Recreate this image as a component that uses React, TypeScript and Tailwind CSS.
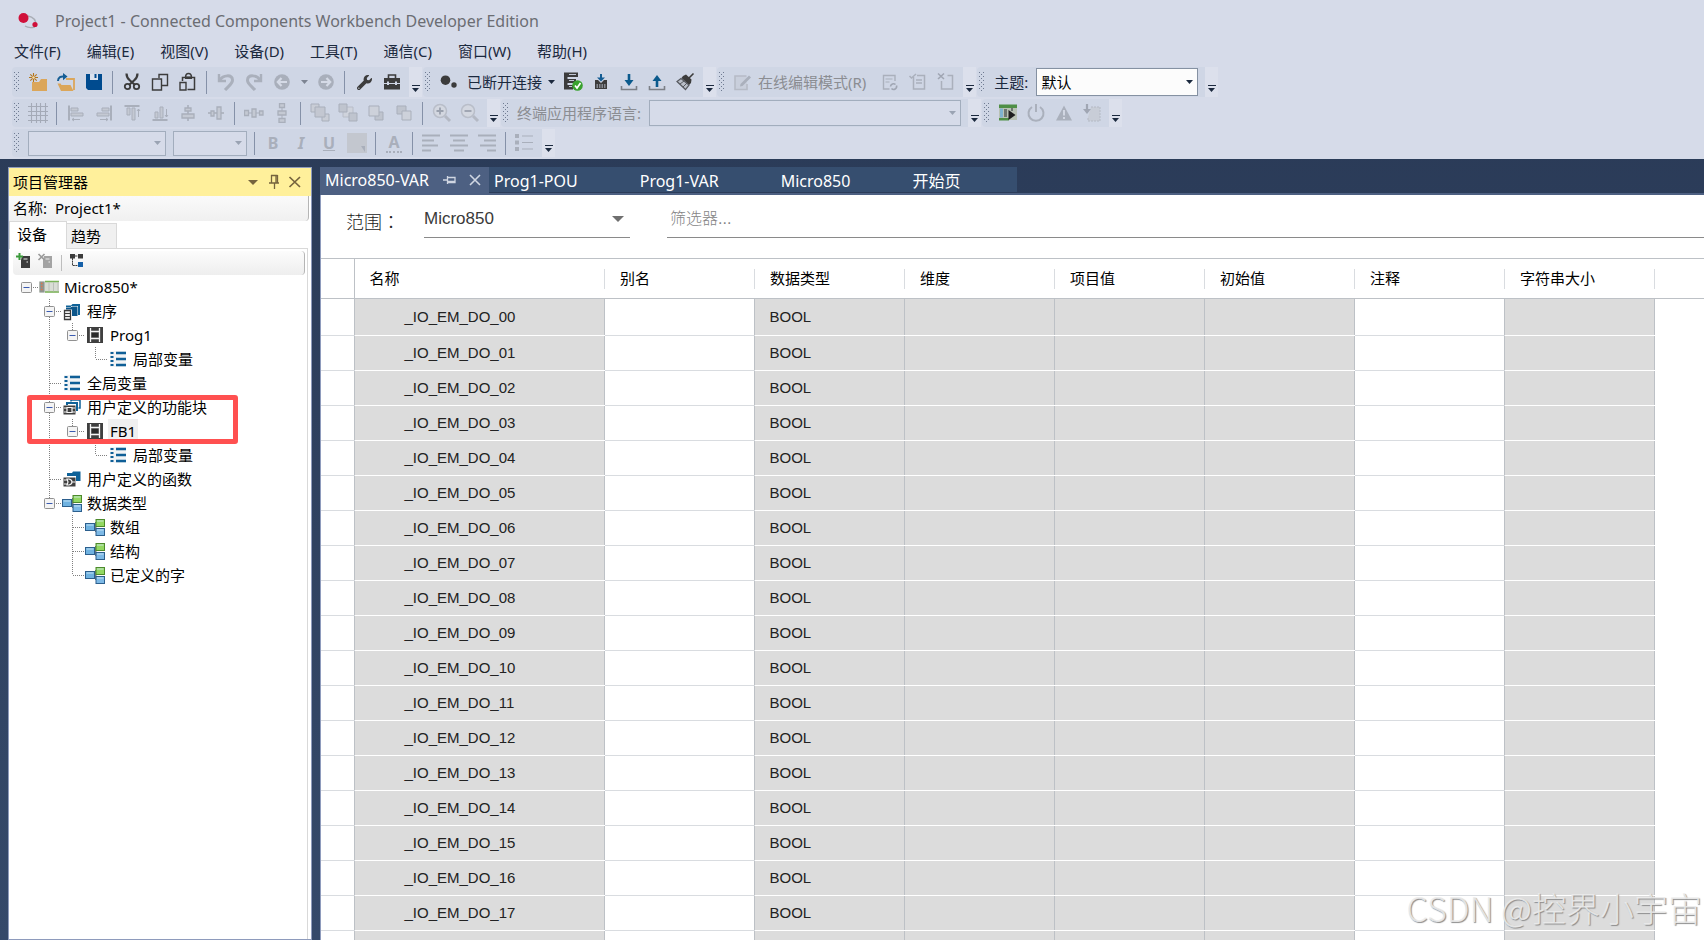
import type { ReactNode } from "react"
import { FaWrench } from "react-icons/fa"

const menus = ["文件(F)", "编辑(E)", "视图(V)", "设备(D)", "工具(T)", "通信(C)", "窗口(W)", "帮助(H)"]

const tabs = ["Prog1-POU", "Prog1-VAR", "Micro850", "开始页"]

const columns = [
  { name: "名称", locked: true },
  { name: "别名", locked: false },
  { name: "数据类型", locked: true },
  { name: "维度", locked: true },
  { name: "项目值", locked: true },
  { name: "初始值", locked: true },
  { name: "注释", locked: false },
  { name: "字符串大小", locked: true },
]

const variables = Array.from({ length: 18 }, (_, i) => `_IO_EM_DO_${String(i).padStart(2, "0")}`)

// the trailing empty entry is the blank row under the list
const rows = [...variables, ""]

type Guide = "blank" | "line" | "tee" | "elbow" | "root" | "open" | "openEnd"
type IconName = "device" | "programs" | "ladder" | "list" | "blocks" | "functions" | "types"

const tree: { label: string; icon: IconName; guides: Guide[]; selected?: boolean }[] = [
  { label: "Micro850*", icon: "device", guides: ["root"] },
  { label: "程序", icon: "programs", guides: ["blank", "open"] },
  { label: "Prog1", icon: "ladder", guides: ["blank", "line", "openEnd"] },
  { label: "局部变量", icon: "list", guides: ["blank", "line", "blank", "elbow"] },
  { label: "全局变量", icon: "list", guides: ["blank", "tee"] },
  { label: "用户定义的功能块", icon: "blocks", guides: ["blank", "open"] },
  { label: "FB1", icon: "ladder", guides: ["blank", "line", "openEnd"], selected: true },
  { label: "局部变量", icon: "list", guides: ["blank", "line", "blank", "elbow"] },
  { label: "用户定义的函数", icon: "functions", guides: ["blank", "tee"] },
  { label: "数据类型", icon: "types", guides: ["blank", "openEnd"] },
  { label: "数组", icon: "types", guides: ["blank", "blank", "tee"] },
  { label: "结构", icon: "types", guides: ["blank", "blank", "tee"] },
  { label: "已定义的字", icon: "types", guides: ["blank", "blank", "elbow"] },
]

function Svg({ children }: { children: ReactNode }) {
  return (
    <svg viewBox="0 0 20 20" className="size-5 shrink-0" fill="none" aria-hidden="true">
      {children}
    </svg>
  )
}

function Tool({ label, disabled, children }: { label: string; disabled?: boolean; children: ReactNode }) {
  return (
    <button aria-label={label} title={label} disabled={disabled} className="flex h-full w-7 shrink-0 items-center justify-center">
      <Svg>{children}</Svg>
    </button>
  )
}

function Sep({ tight }: { tight?: boolean }) {
  return <span className={`ml-1 h-[23px] w-px shrink-0 bg-[#8591a8] ${tight ? "mr-1" : "mr-[5px]"}`} />
}

function Caret({ className = "text-[#1b293e]" }: { className?: string }) {
  return (
    <svg viewBox="0 0 7 4" className={`h-1 w-[7px] shrink-0 ${className}`} aria-hidden="true">
      <path d="M0 0h7L3.5 4z" fill="currentColor" />
    </svg>
  )
}

function Grip() {
  const dots = [0, 1, 2, 3, 4]
  return (
    <svg viewBox="0 0 6 20" className="mr-1 ml-0.5 h-5 w-1.5 shrink-0" fill="#6f7b92" aria-hidden="true">
      {dots.map((d) => (
        <g key={d}>
          <rect x="0" y={d * 4} width="1" height="1" />
          <rect x="4" y={d * 4} width="1" height="1" />
          <rect x="2" y={d * 4 + 2} width="1" height="1" />
        </g>
      ))}
    </svg>
  )
}

function Bar({ children }: { children: ReactNode }) {
  return (
    <div className="mr-px flex h-full">
      <div className="flex h-full items-center rounded-l-sm bg-[#cfd6e5]">
        <Grip />
        {children}
      </div>
      <button aria-label="工具栏选项" className="flex h-full w-[13px] flex-col items-center justify-end bg-[#dce0ec] pb-[5px]">
        <span className="mb-0.5 h-px w-2 bg-[#1b293e]" />
        <Caret />
      </button>
    </div>
  )
}

function Combo({ label, box, disabled, value = "" }: { label: string; box: string; disabled?: boolean; value?: string }) {
  return (
    <div className={`relative flex items-center ${box}`}>
      <select
        aria-label={label}
        disabled={disabled}
        className={`size-full appearance-none border px-1 text-[15px] leading-5 text-black opacity-100 ${
          disabled ? "border-[#a2adbd] bg-[#d6dbe9]" : "border-[#8591a2] bg-[#fcfcfc]"
        }`}
      >
        <option>{value}</option>
      </select>
      <span className="pointer-events-none absolute right-[5px]">
        <Caret className={disabled ? "text-[#9aa3b3]" : "text-[#1b293e]"} />
      </span>
    </div>
  )
}

function StandardBar() {
  return (
    <Bar>
      <Tool label="新建">
        <path d="M4 10h7l2-3h6v12H4z" fill="#dba65a" />
        <path d="M5.500 1v9M1 5.500h9M2.300 2.300l6.400 6.400M8.700 2.300L2.300 8.700" stroke="#b4761c" strokeWidth="1.100" />
        <circle cx="5.500" cy="5.500" r="1.300" fill="#f3dcae" />
      </Tool>
      <Tool label="打开">
        <path d="M10 7h8v11" stroke="#dba65a" strokeWidth="1.800" />
        <path d="M1.500 11.500l3 0 1 1.500h9l3 6H5z" fill="#dba65a" />
        <path d="M2 9c0-4 3-5 6.500-4.500" stroke="#155d94" strokeWidth="2" />
        <path d="M7 1l4.500 3.500L7 8.200z" fill="#155d94" />
      </Tool>
      <Tool label="保存">
        <path d="M2 2h16v16H4l-2-2z" fill="#004b8f" />
        <path d="M6 2h8v6H6z" fill="#dbe2ee" />
        <path d="M10.500 2h2v4h-2z" fill="#004b8f" />
      </Tool>
      <Sep />
      <Tool label="剪切">
        <path d="M4.500 1.500c0 3 1 5 3.500 7l4.500 4M15.500 1.500c0 3-1 5-3.500 7l-4.500 4" stroke="#3c3c3c" strokeWidth="2.200" />
        <circle cx="5.500" cy="14.500" r="2.700" stroke="#3c3c3c" strokeWidth="1.800" />
        <circle cx="14.500" cy="14.500" r="2.700" stroke="#3c3c3c" strokeWidth="1.800" />
      </Tool>
      <Tool label="复制">
        <path d="M9 6V2.500h8.500v11H12" stroke="#3c3c3c" strokeWidth="1.400" />
        <path d="M2.500 7h9v11h-9z" stroke="#3c3c3c" strokeWidth="1.400" />
      </Tool>
      <Tool label="粘贴">
        <path d="M4.500 9V5.500h12v12H9.500" stroke="#3c3c3c" strokeWidth="1.500" />
        <path d="M7.500 5.500C7.500 0 13.500 0 13.500 5.500" stroke="#3c3c3c" strokeWidth="1.500" />
        <path d="M7 4.500h7v2.500H7z" fill="#3c3c3c" />
        <path d="M2 10.500h6v7.500H2z" stroke="#3c3c3c" strokeWidth="1.400" />
      </Tool>
      <Sep />
      <Tool label="撤消" disabled>
        <path d="M3 2v7h7" stroke="#aab0bc" strokeWidth="2.400" />
        <path d="M4 8c3-5 12-6 12.500 0 .2 3.500-3.500 5.500-7.500 10" stroke="#aab0bc" strokeWidth="3" />
      </Tool>
      <Tool label="重复" disabled>
        <path d="M17 2v7h-7" stroke="#aab0bc" strokeWidth="2.400" />
        <path d="M16 8C13 3 4 2 3.500 8c-.2 3.500 3.500 5.500 7.500 10" stroke="#aab0bc" strokeWidth="3" />
      </Tool>
      <Tool label="后退" disabled>
        <circle cx="10" cy="10" r="7.800" fill="#a9afbb" />
        <path d="M15 10H6M9.500 6L5.800 10l3.700 4" stroke="#d5dae6" strokeWidth="2.200" />
      </Tool>
      <button aria-label="后退历史" disabled className="flex w-4 items-center justify-center">
        <Caret className="text-[#7d8492]" />
      </button>
      <Tool label="前进" disabled>
        <circle cx="10" cy="10" r="7.800" fill="#a9afbb" />
        <path d="M5 10h9M10.500 6l3.700 4-3.700 4" stroke="#d5dae6" strokeWidth="2.200" />
      </Tool>
      <Sep />
      <button aria-label="选项" className="flex w-7 items-center justify-center text-[#3c3c3c]">
        <FaWrench size={15} />
      </button>
      <Tool label="工具箱">
        <path d="M2 6h16v5H2zM2 12h16v5.500H2z" fill="#3c3c3c" />
        <path d="M6.500 6V3h7v3" stroke="#3c3c3c" strokeWidth="1.600" />
        <path d="M5 9.500h2V13H5zM13 9.500h2V13h-2z" fill="#cfd6e5" />
      </Tool>
      <span className="w-[3px]" />
    </Bar>
  )
}

function ConnectionBar() {
  return (
    <Bar>
      <button className="flex h-full items-center text-[15px] text-[#1b293e]">
        <span className="mx-1">
          <Svg>
            <circle cx="6.500" cy="8.200" r="4.800" fill="#3c3c3c" />
            <circle cx="15" cy="13" r="2.700" fill="#3c3c3c" />
          </Svg>
        </span>
        <span className="ml-1">已断开连接</span>
        <span className="mr-1 ml-1.5">
          <Caret />
        </span>
      </button>
      <Tool label="验证">
        <path d="M1 .500h14V5H4.500v2H13v4H4.500v2H10v4.500H1z" fill="#3c3c3c" />
        <path d="M6 2.500h7M6 8.500h5M6 14.500h3" stroke="#cfd6e5" strokeWidth=".9" />
        <circle cx="14.500" cy="13.500" r="5.300" fill="#39a22f" />
        <path d="M12 13.500l2 2.500 3.500-5" stroke="#fff" strokeWidth="1.700" />
      </Tool>
      <Tool label="编译">
        <path d="M4 8h3l3 3 3-3h3v9H4z" fill="#3c3c3c" />
        <path d="M5.500 13h9M5.500 15h9" stroke="#cfd6e5" strokeWidth="1" strokeDasharray="1.500 1" />
        <path d="M10 2v5" stroke="#155d94" strokeWidth="2" />
        <path d="M6 5.500h8l-4 4z" fill="#155d94" />
      </Tool>
      <Tool label="下载">
        <path d="M2.500 14v3.500h15V14" stroke="#7c8087" strokeWidth="1.600" />
        <path d="M10 2v8" stroke="#0b5a8c" strokeWidth="2.600" />
        <path d="M5.500 8h9L10 14z" fill="#0b5a8c" />
      </Tool>
      <Tool label="上传">
        <path d="M2.500 14v3.500h15V14" stroke="#7c8087" strokeWidth="1.600" />
        <path d="M10 15V8" stroke="#0b5a8c" strokeWidth="2.600" />
        <path d="M5.500 9h9L10 3z" fill="#0b5a8c" />
      </Tool>
      <Tool label="清理">
        <path d="M18.500 1.500L14 6" stroke="#3c3c3c" strokeWidth="1.600" />
        <path d="M8 4l3-1.500 5.500 5L16 11l-2 2L6.500 6z" fill="#3c3c3c" />
        <path d="M6 6.500L2 9.500l8.500 8L14 13z" fill="#b9bec8" stroke="#55585e" strokeWidth="1.200" />
        <path d="M5 12l4-3M8 15l4-4" stroke="#55585e" strokeWidth="1" />
      </Tool>
      <span className="w-1" />
    </Bar>
  )
}

function OnlineEditBar() {
  return (
    <Bar>
      <button disabled className="flex h-full items-center text-[15px] text-[#8b8d92]">
        <span className="mr-1.5 ml-[3px]">
          <Svg>
            <path d="M14.500 4H3v13.500h12V12" fill="#c9cfdc" stroke="#b6bbc6" strokeWidth="1.600" />
            <path d="M17 3.500l2 2L10.500 14 8 14.500l.5-2.500z" fill="#aab0bc" />
          </Svg>
        </span>
        <span className="mr-2.5">在线编辑模式(R)</span>
      </button>
      <Tool label="接受更改" disabled>
        <path d="M15 9V3.500H3.500v13.500h6" stroke="#aab0bc" strokeWidth="1.400" />
        <path d="M5.500 7h7M5.500 10h4" stroke="#aab0bc" strokeWidth="1.200" />
        <path d="M10.500 14.500a3 3 0 0 1 5-2M16.500 13.500a3 3 0 0 1-5 3" stroke="#a0a6b3" strokeWidth="1.600" />
      </Tool>
      <Tool label="测试更改" disabled>
        <path d="M5.500 5v12h11V3.500H9" stroke="#aab0bc" strokeWidth="1.500" />
        <path d="M1.500 4l2 2L8 2M8 8h6M8 11h6" stroke="#aab0bc" strokeWidth="1.500" />
      </Tool>
      <Tool label="放弃更改" disabled>
        <path d="M5.500 9v8h11V3.500h-5" stroke="#aab0bc" strokeWidth="1.500" />
        <path d="M2 1.500l6 5.500M8 1.500L2 7" stroke="#a0a6b3" strokeWidth="1.600" />
      </Tool>
      <span className="w-[3px]" />
    </Bar>
  )
}

function LayoutBar() {
  return (
    <Bar>
      <Tool label="网格" disabled>
        <path d="M3.500 0v20M8.500 0v20M12.500 0v20M17.500 0v20M0 3.500h20M0 8.500h20M0 12.500h20M0 17.500h20" stroke="#a4aab7" strokeWidth="1.100" />
      </Tool>
      <Sep />
      <Tool label="左对齐" disabled>
        <path d="M3 2.500v15" stroke="#a9afbb" strokeWidth="2" />
        <path d="M5 5h7v3H5zM5 10h12v3H5z" fill="#c4c9d3" stroke="#a9afbb" />
        <path d="M6 16.500h8M8 15l-2 1.500L8 18" stroke="#a9afbb" />
      </Tool>
      <Tool label="右对齐" disabled>
        <path d="M17 2.500v15" stroke="#a9afbb" strokeWidth="2" />
        <path d="M8 5h7v3H8zM3 10h12v3H3z" fill="#c4c9d3" stroke="#a9afbb" />
        <path d="M6 16.500h8M12 15l2 1.500-2 1.500" stroke="#a9afbb" />
      </Tool>
      <Tool label="顶端对齐" disabled>
        <path d="M2.500 3h15" stroke="#a9afbb" strokeWidth="2" />
        <path d="M5 5h3v7H5zM10 5h3v12h-3z" fill="#c4c9d3" stroke="#a9afbb" />
        <path d="M16.500 6v8M15 8l1.500-2L18 8" stroke="#a9afbb" />
      </Tool>
      <Tool label="底端对齐" disabled>
        <path d="M2.500 17h15" stroke="#a9afbb" strokeWidth="2" />
        <path d="M5 9h3v6H5zM10 4h3v11h-3z" fill="#c4c9d3" stroke="#a9afbb" />
        <path d="M16.500 6v8M15 12l1.500 2 1.500-2" stroke="#a9afbb" />
      </Tool>
      <Tool label="水平居中" disabled>
        <path d="M10 2v16" stroke="#a9afbb" strokeWidth="1.600" />
        <path d="M7 5h6v3H7zM4 11h12v4H4z" fill="#c4c9d3" stroke="#a9afbb" strokeWidth="1.300" />
      </Tool>
      <Tool label="垂直居中" disabled>
        <path d="M2 10h16" stroke="#a9afbb" strokeWidth="1.600" />
        <path d="M5 8h3v5H5zM11 4h4v12h-4z" fill="#c4c9d3" stroke="#a9afbb" strokeWidth="1.300" />
      </Tool>
      <Sep />
      <Tool label="水平分布" disabled>
        <path d="M1 10h18" stroke="#a9afbb" />
        <path d="M.500 7.500h4v5h-4zM8 6h4v8H8zM15.500 8h3.500v4h-3.500z" fill="#c4c9d3" stroke="#a9afbb" strokeWidth="1.300" />
      </Tool>
      <Tool label="垂直分布" disabled>
        <path d="M10 1v18" stroke="#a9afbb" />
        <path d="M7.500 .500h5v4h-5zM6 8h8v4H6zM7 15.500h6v4H7z" fill="#c4c9d3" stroke="#a9afbb" strokeWidth="1.300" />
      </Tool>
      <Sep />
      <Tool label="置于顶层" disabled>
        <path d="M1 1h8v8H1zM12 11h7v7h-7z" fill="#c9cdd6" stroke="#a9afbb" />
        <path d="M5 4h10v10H5z" fill="#c3c7d1" stroke="#a9afbb" />
      </Tool>
      <Tool label="置于底层" disabled>
        <path d="M5 4h10v10H5z" fill="#cfd3dc" stroke="#b8bdc8" />
        <path d="M1 1h8v8H1zM11 10h8v8h-8z" fill="#bfc4ce" stroke="#a9afbb" />
      </Tool>
      <Tool label="上移一层" disabled>
        <path d="M9 9h8v8H9z" fill="#bfc4ce" stroke="#a9afbb" />
        <path d="M3 3h10v10H3z" fill="#cdd1da" stroke="#a9afbb" />
      </Tool>
      <Tool label="下移一层" disabled>
        <path d="M3 3h9v8H3z" fill="#bfc4ce" stroke="#a9afbb" />
        <path d="M8 8h9v9H8z" fill="#cdd1da" stroke="#a9afbb" />
      </Tool>
      <Sep />
      <Tool label="放大" disabled>
        <path d="M13 13l5 5" stroke="#b4b9c4" strokeWidth="3" />
        <circle cx="8" cy="8" r="6.500" fill="#d3d7e0" stroke="#b9bec9" strokeWidth="1.500" />
        <path d="M8 4.500v7M4.500 8h7" stroke="#9aa1ae" strokeWidth="1.800" />
      </Tool>
      <Tool label="缩小" disabled>
        <path d="M13 13l5 5" stroke="#b4b9c4" strokeWidth="3" />
        <circle cx="8" cy="8" r="6.500" fill="#d3d7e0" stroke="#b9bec9" strokeWidth="1.500" />
        <path d="M4.500 8h7" stroke="#9aa1ae" strokeWidth="1.800" />
      </Tool>
      <span className="w-[3px]" />
    </Bar>
  )
}

function LanguageBar() {
  return (
    <Bar>
      <span className="mr-2 ml-1 text-[15px] text-[#8b8d92]">终端应用程序语言:</span>
      <Combo label="终端应用程序语言" box="mr-[7px] h-[26px] w-[312px]" disabled />
    </Bar>
  )
}

function SimulatorBar() {
  return (
    <Bar>
      <Tool label="模拟器">
        <path d="M1 2h18v15H1z" fill="#b9c2b4" />
        <path d="M1 1.500h18v3.500H1zM1 15h10v2.500H1z" fill="#4f8f46" />
        <path d="M2 5.500h3v9H2z" fill="#7fb3cf" />
        <path d="M6 6h3v8H6zM13 5h2v3h-2z" fill="#6d7670" />
        <path d="M10.500 7l7 5-7 5z" fill="#1e1e1e" />
      </Tool>
      <Tool label="电源" disabled>
        <path d="M6 4a7.500 7.500 0 1 0 8 0" stroke="#aab0bc" strokeWidth="2" />
        <path d="M10 1v8" stroke="#aab0bc" strokeWidth="2" />
      </Tool>
      <Tool label="警告" disabled>
        <path d="M10 2.500l8 15H2z" fill="#aab0bc" />
        <path d="M10 7v5.500M10 14v2" stroke="#d6dbe6" strokeWidth="1.800" />
      </Tool>
      <Tool label="导入" disabled>
        <path d="M9 4h9v14H6v-4" fill="#c8cdd7" stroke="#b4b9c4" strokeDasharray="2 1" />
        <path d="M5 1v7" stroke="#a0a6b3" strokeWidth="2.200" />
        <path d="M1 6l4 5 4-5z" fill="#a0a6b3" />
      </Tool>
      <span className="w-[3px]" />
    </Bar>
  )
}

function FormatBar() {
  return (
    <Bar>
      <Combo label="字体" box="ml-1 h-[25px] w-[138px]" disabled />
      <Combo label="字号" box="mx-[7px] h-[25px] w-[74px]" disabled />
      <span className="-ml-1 flex h-full items-center">
        <Sep tight />
        <button disabled className="w-7 text-base font-bold text-[#a9afbb]">B</button>
        <button disabled className="w-7 text-base font-bold text-[#a9afbb] italic">I</button>
        <button disabled className="w-7 text-base font-bold text-[#a9afbb] underline">U</button>
        <Tool label="颜色" disabled>
          <path d="M0 0h20v20H0z" fill="#c3c7cf" />
          <path d="M14 13h4v6z" fill="#a9afbb" />
        </Tool>
        <Sep tight />
        <button disabled className="flex h-full w-7 flex-col items-center justify-center text-base leading-4 font-bold text-[#a9afbb]">
          A
          <span className="mt-px w-4 border-t-2 border-dotted border-[#a9afbb]" />
        </button>
        <Sep tight />
        <Tool label="左对齐" disabled>
          <path d="M1 2.500h18M1 7.500h12M1 12.500h16M1 17.500h9" stroke="#a9afbb" strokeWidth="2" />
        </Tool>
        <Tool label="居中" disabled>
          <path d="M1 2.500h18M4 7.500h12M1 12.500h18M5 17.500h10" stroke="#a9afbb" strokeWidth="2" />
        </Tool>
        <Tool label="右对齐" disabled>
          <path d="M1 2.500h18M7 7.500h12M3 12.500h16M10 17.500h9" stroke="#a9afbb" strokeWidth="2" />
        </Tool>
        <Sep tight />
        <Tool label="项目符号" disabled>
          <path d="M1 1h4v4H1zM1 7.500h4v4H1zM1 14h4v4H1z" fill="#a9afbb" />
          <path d="M8 3h11M8 9.500h11M8 16h11" stroke="#a9afbb" />
        </Tool>
        <span className="w-1" />
      </span>
    </Bar>
  )
}

function GuideCell({ kind }: { kind: Guide }) {
  const up = kind === "line" || kind === "tee" || kind === "elbow" || kind === "open" || kind === "openEnd"
  const down = kind === "line" || kind === "tee" || kind === "open"
  const across = kind !== "line" && kind !== "blank"
  const box = kind === "root" || kind === "open" || kind === "openEnd"
  return (
    <svg viewBox="0 0 23 24" className="h-6 w-[23px] shrink-0" fill="none" aria-hidden="true">
      <g stroke="#808080" strokeDasharray="1 1">
        {up && <path d="M11.500 0v12" />}
        {down && <path d="M11.500 12v12" />}
        {across && <path d="M12 12.500h11" />}
      </g>
      {box && (
        <>
          <rect x="6.500" y="7.500" width="10" height="10" rx="1" fill="#f4f4f4" stroke="#919191" />
          <path d="M8.500 12.500h6" stroke="#3a5bb0" />
        </>
      )}
    </svg>
  )
}

function TreeIcon({ name }: { name: IconName }) {
  if (name === "device")
    return (
      <Svg>
        <path d="M0 4.500h20v11H0z" fill="#d9ddd5" />
        <path d="M6 4.500h14M6 15h14" stroke="#79b356" strokeWidth="1.300" />
        <path d="M.500 4.500h5v11h-5z" fill="#8f9591" />
        <path d="M2 6.500h1.500M2 9.500h1.500M2 12.500h1.500" stroke="#e2744a" strokeWidth="1.500" />
        <path d="M10 5.500v9M14.500 5.500v9M19 5.500v9" stroke="#b4b9b2" strokeWidth=".8" />
      </Svg>
    )
  if (name === "programs")
    return (
      <Svg>
        <path d="M4 6V4.500h5L10.500 3H18v11h-2V5H9v1z" fill="#0f6298" />
        <path d="M4 6.500h4.500L10 5.500h5.500V15H10V8.500H4z" fill="#0d568a" />
        <path d="M2.500 9.500h6v9h-6z" fill="#eee" stroke="#3c3c3c" strokeWidth="1.300" />
        <path d="M3 12.500h5M3 15.500h5" stroke="#3c3c3c" />
      </Svg>
    )
  if (name === "ladder")
    return (
      <Svg>
        <path d="M2 2h16v16H2z" fill="#3f3f3f" />
        <path d="M5.500 3v14M14.500 3v14M5.500 6.500h9M5.500 13.500h9" stroke="#f5f5f5" strokeWidth="1.300" />
        <path d="M7 8h6v4H7z" fill="#2b2b2b" />
      </Svg>
    )
  if (name === "list")
    return (
      <Svg>
        <path d="M2 2h16v16H2z" fill="#f1f3f5" />
        <path d="M2.500 4h3M2.500 8h3M2.500 12h3M2.500 16h3" stroke="#0f5f97" strokeWidth="2" />
        <path d="M8 4h10M8 10h10M8 16h10" stroke="#0f5f97" strokeWidth="2.300" />
      </Svg>
    )
  if (name === "blocks")
    return (
      <Svg>
        <path d="M9 4.500V3h9v8h-1.500" stroke="#0f6298" strokeWidth="1.500" />
        <path d="M5 8V6h10v8" stroke="#0f6298" strokeWidth="2" />
        <path d="M1.500 8.500h12v9h-12z" fill="#3f3f3f" />
        <path d="M2 11h2.500M2 15h2.500M10.500 11H13M10.500 15H13M5 10.500h5v5H5z" stroke="#f5f5f5" strokeWidth="1.200" />
      </Svg>
    )
  if (name === "functions")
    return (
      <Svg>
        <path d="M5 5.500V4h5l1-1.500h7.500V12H14V7H5z" fill="#0f6298" />
        <path d="M1.500 8.500h12v9h-12z" fill="#3f3f3f" />
        <path d="M2 11h3M2 15h3M10 13h3.500M5 10h2c4 1 4 5 0 6H5l1-3z" stroke="#f5f5f5" strokeWidth="1.200" />
      </Svg>
    )
  return (
    <Svg>
      <path d="M9 10h3M10.500 5v10" stroke="#6c7680" />
      <rect x="0.500" y="6.500" width="9" height="7" fill="#6fb2e0" stroke="#2c5f8d" />
      <rect x="11" y="2.500" width="8.500" height="7" fill="#93d862" stroke="#4d8a2c" />
      <rect x="11" y="11.500" width="8.500" height="7" fill="#7db9e6" stroke="#2c5f8d" />
      <path d="M1.500 8h7M12 4h6.500M12 13h6.500" stroke="#d6ecfa" strokeOpacity=".8" />
    </Svg>
  )
}

function ProjectPanel() {
  return (
    <aside className="flex w-[304px] shrink-0 flex-col border border-[#8e9bbc] bg-white text-[15px] text-black">
      <div className="flex h-7 items-center bg-[#fff09b] pl-1">
        <h2 className="flex-1">项目管理器</h2>
        <button aria-label="窗口位置" className="flex w-[21px] justify-center">
          <svg viewBox="0 0 10 5" className="h-[5px] w-2.5" aria-hidden="true">
            <path d="M0 0h10L5 5z" fill="#75633d" />
          </svg>
        </button>
        <button aria-label="自动隐藏" className="flex w-[21px] justify-center">
          <Svg>
            <path d="M7 3.500h6.500M7.500 3v8M12 3v8M13.500 3v8M5 11h10M10.500 11v6" stroke="#75633d" strokeWidth="1.300" />
          </Svg>
        </button>
        <button aria-label="关闭" className="mr-1.5 flex w-[21px] justify-center">
          <Svg>
            <path d="M4.500 5l10.500 10M15 5L4.500 15" stroke="#75633d" strokeWidth="1.700" />
          </Svg>
        </button>
      </div>
      <div className="mr-0.5 flex h-[25px] items-center gap-2 rounded-br-sm border-r border-[#b5b5b5] bg-linear-to-b from-[#fafafa] to-[#f0f0f0] pl-1">
        <span>名称:</span>
        <span>Project1*</span>
      </div>
      <div className="mr-[3px] flex h-7 items-end">
        <button className="h-full w-[58px] border border-b-0 border-[#d9d9d9] pb-0.5 pl-[7px] text-left">设备</button>
        <button className="h-[26px] w-[50px] border border-l-0 border-[#d9d9d9] bg-[#f0f0f0] pl-1 text-left">趋势</button>
        <span className="flex-1 self-stretch border-b border-[#d9d9d9]" />
      </div>
      <div className="mr-[3px] flex-1 border-r border-[#d9d9d9]">
        <div className="mt-0.5 mr-0.5 ml-1 flex h-6 items-center rounded-sm border-r border-[#b5b5b5] bg-linear-to-b from-[#fcfcfc] to-[#eee]">
          <button aria-label="添加设备" className="flex w-[22px] justify-center pb-1">
            <Svg>
              <path d="M8 5h8v12H7V9z" fill="#3c3c3c" />
              <path d="M9.500 8h4M12.500 11h1.500" stroke="#eee" />
              <path d="M5.500 2v7M2 5.500h7" stroke="#3a9a3a" strokeWidth="2" />
            </Svg>
          </button>
          <button aria-label="删除设备" disabled className="flex w-[22px] justify-center pb-1">
            <Svg>
              <path d="M8 5h8v12H7V9z" fill="#a3a3a3" />
              <path d="M9.500 8h4M12.500 11h1.500" stroke="#eee" />
              <path d="M2.500 3l6 6M8.500 3l-6 6" stroke="#9a9a9a" strokeWidth="1.600" />
            </Svg>
          </button>
          <span className="mx-1 h-4 w-px bg-[#bdbdbd]" />
          <button aria-label="层次结构" className="flex w-[22px] justify-center pb-1">
            <Svg>
              <path d="M3 3h5v4.500H3zM11 3h5v4.500h-5z" fill="#3c3c3c" />
              <path d="M5.500 7v7.500H11M8 5h3" stroke="#3c3c3c" strokeDasharray="2 .6" />
              <path d="M11 11h5v5h-5z" fill="#1560a8" />
            </Svg>
          </button>
        </div>
        <ul className="relative pl-1.5">
          {tree.map((item, i) => (
            <li key={i} className="flex h-6 items-center">
              {item.guides.map((g, k) => (
                <GuideCell key={k} kind={g} />
              ))}
              <span className="mr-[3px] ml-px">
                <TreeIcon name={item.icon} />
              </span>
              <span className={`h-6 px-0.5 leading-6 ${item.selected ? "bg-[#f0f0f0]" : ""}`}>{item.label}</span>
            </li>
          ))}
          <li aria-hidden="true" className="pointer-events-none absolute top-[120px] left-[18px] h-[49px] w-[211px] rounded-[3px] border-[5px] border-[#ff5050]" />
        </ul>
      </div>
    </aside>
  )
}

function VariableTable() {
  return (
    <table className="w-full table-fixed border-collapse text-left font-['Liberation_Sans','Noto_Sans_CJK_SC',sans-serif] text-[15px]">
      <colgroup>
        <col className="w-[33px]" />
        <col className="w-[250px]" />
        {columns.slice(1).map((c) => (
          <col key={c.name} className="w-[150px]" />
        ))}
        <col />
      </colgroup>
      <thead>
        <tr className="h-10 border-y border-[#bdc1c6]">
          <th />
          {columns.map((c, i) => (
            <th key={c.name} className={`p-0 font-normal text-black ${i === 0 ? "border-l border-[#bdc1c6]" : ""}`}>
              <span className={`block h-5 pl-[15px] leading-5 ${i === 0 ? "" : "border-l border-[#d9dce0]"}`}>{c.name}</span>
            </th>
          ))}
          <th className="p-0">
            <span className="block h-5 border-l border-[#d9dce0]" />
          </th>
        </tr>
      </thead>
      <tbody>
        {rows.map((v) => (
          <tr key={v} className="h-[35px] text-[#222] first:h-[37px]">
            <td className="border-b border-[#d9dce0]" />
            {columns.map((c, i) => (
              <td
                key={c.name}
                className={`border-l border-l-[#bdc1c6] p-0 ${
                  c.locked ? "border-b border-b-white bg-[#dcdcdc]" : "border-b border-b-[#d9dce0]"
                } ${i === 0 ? "pl-[50px]" : "pl-[15px]"}`}
              >
                {i === 0 && v}
                {i === 2 && v && "BOOL"}
              </td>
            ))}
            <td className="border-l border-[#bdc1c6]" />
          </tr>
        ))}
      </tbody>
    </table>
  )
}

export default function App() {
  return (
    <div className="flex h-screen flex-col overflow-hidden bg-linear-to-b from-[#293955] to-[#35496a] font-['Noto_Sans','Noto_Sans_CJK_SC',sans-serif] text-[15px]">
      <header className="h-[159px] shrink-0 bg-[#d6dbe9] text-[#1b293e]">
        <div className="flex h-[39px] items-center gap-4 pt-[3px] pl-[18px]">
          <svg viewBox="0 0 21 18" className="h-[18px] w-[21px]" fill="none" aria-hidden="true">
            <path d="M10 4c5 1 8 4 8 9M7 14c3 2 6 2 10 1" stroke="#a9adb5" strokeWidth="1.300" />
            <circle cx="5.500" cy="6" r="5" fill="#d0103a" />
            <circle cx="17" cy="12.500" r="2.600" fill="#d0103a" />
          </svg>
          <h1 className="text-base text-[#6b6d73]">Project1 - Connected Components Workbench Developer Edition</h1>
        </div>
        <nav className="mb-1 flex h-6 items-center gap-[26px] pl-3.5">
          {menus.map((m) => (
            <button key={m}>{m}</button>
          ))}
        </nav>
        <div className="flex flex-col gap-0.5 pl-3">
          <div className="flex h-[30px]">
            <StandardBar />
            <ConnectionBar />
            <OnlineEditBar />
            <Bar>
              <span className="mr-2 ml-[5px]">主题:</span>
              <Combo label="主题" box="mr-[7px] h-7 w-[162px]" value="默认" />
            </Bar>
          </div>
          <div className="flex h-7">
            <LayoutBar />
            <LanguageBar />
            <SimulatorBar />
          </div>
          <div className="flex h-7">
            <FormatBar />
          </div>
        </div>
      </header>
      <div className="flex min-h-0 flex-1 pt-2 pl-2">
        <ProjectPanel />
        <main className="relative ml-2 flex min-w-0 flex-1 flex-col overflow-hidden">
          <div className="flex h-7 shrink-0 border-b-2 border-[#4d6082] text-base text-white">
            <div className="flex items-center bg-[#4d6082] pl-[5px]">
              <button>Micro850-VAR</button>
              <button aria-label="固定" className="ml-3">
                <Svg>
                  <path d="M2 10h4M6.500 6v8M7 7.500h7v5H7M7 11.500h7" stroke="#d0d6e2" strokeWidth="1.300" />
                </Svg>
              </button>
              <button aria-label="关闭" className="mr-1 ml-1">
                <Svg>
                  <path d="M5 5l10 10M15 5L5 15" stroke="#d0d6e2" strokeWidth="1.600" />
                </Svg>
              </button>
            </div>
            {tabs.map((t) => (
              <button key={t} className="h-[25px] bg-[#364e6f] pt-0.5 pr-[57px] pl-[5px] leading-5">
                {t}
              </button>
            ))}
          </div>
          <div className="flex-1 border-l border-[#8e9bbc] bg-white">
            <div className="mb-5 flex h-[43px] items-end pl-[25px]">
              <label htmlFor="scope" className="h-[33px] w-[78px] font-['Noto_Sans_CJK_TC',sans-serif] text-[18px] leading-8 font-light text-[#222]">
                范围：
              </label>
              <div className="relative mr-[37px] flex w-[206px] items-center">
                <select
                  id="scope"
                  className="h-[38px] w-full appearance-none border-b border-[#8a8a8a] bg-transparent font-['Liberation_Sans',sans-serif] text-[17px] text-[#3a3a3a]"
                >
                  <option>Micro850</option>
                </select>
                <svg viewBox="0 0 12 6" className="pointer-events-none absolute right-1.5 h-1.5 w-3" aria-hidden="true">
                  <path d="M0 0h12L6 6z" fill="#6f6f6f" />
                </svg>
              </div>
              <input
                aria-label="筛选器"
                placeholder="筛选器..."
                className="h-[38px] min-w-0 flex-1 border-b border-[#8a8a8a] pl-[3px] font-['Liberation_Sans','Noto_Sans_CJK_SC',sans-serif] text-base font-light placeholder:text-[#858585]"
              />
            </div>
            <VariableTable />
          </div>
          <p className="pointer-events-none absolute right-0.5 bottom-3 font-['Noto_Sans_CJK_SC',sans-serif] text-[34px] leading-10 font-light whitespace-nowrap text-[#ececec]/90 [text-shadow:1px_1px_1px_#8c8c8c]">
            CSDN @控界小宇宙
          </p>
        </main>
      </div>
    </div>
  )
}
